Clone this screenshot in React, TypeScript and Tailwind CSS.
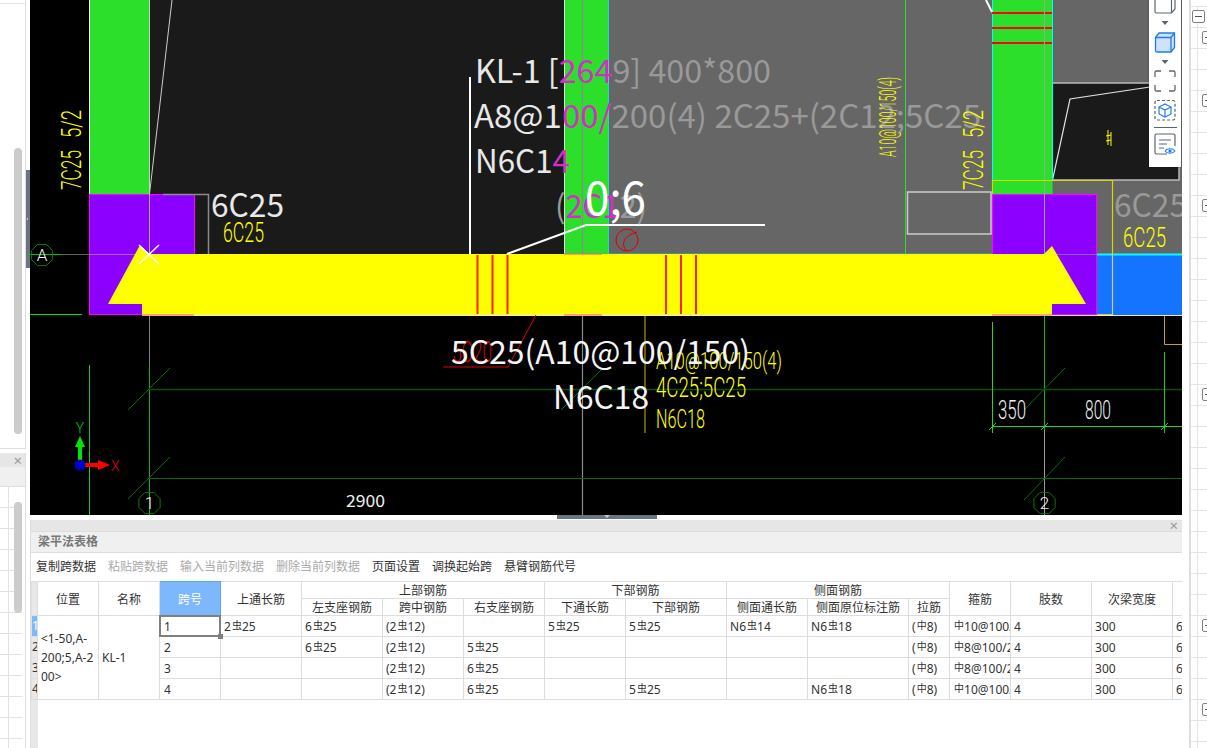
import type { ReactNode } from "react";

const GRAY = "#999999";
const PINK = "#d22fc8";
const WHITE = "#e8e8e8";
const SANS = "'Noto Sans CJK SC', 'Noto Sans', sans-serif";
const CAD = "Roboto, 'Liberation Sans', sans-serif";

function Bar({ c = "虫" }: { c?: string }) {
  return <span className="relative -top-[2px] ml-[1px] text-[10px] leading-none">{c}</span>;
}

function Steel({ a, b, c }: { a?: string; b: string; c?: string }) {
  return (
    <>
      {a}
      <Bar c={c} />
      {b}
    </>
  );
}

const colWidths = [6, 61, 61, 61, 81, 81, 81, 81, 81, 101, 81, 101, 41, 61, 81, 81, 81];

type Row = { no: string; top?: ReactNode; left?: ReactNode; right?: ReactNode; through?: ReactNode; bottom?: ReactNode; side?: ReactNode; sideAt?: ReactNode; stir: ReactNode };

const rows: Row[] = [
  {
    no: "1",
    top: <Steel a="2" b="25" />,
    left: <Steel a="6" b="25" />,
    through: <Steel a="5" b="25" />,
    bottom: <Steel a="5" b="25" />,
    side: <Steel a="N6" b="14" />,
    sideAt: <Steel a="N6" b="18" />,
    stir: <Steel c="中" b="10@100/200(4)" />,
  },
  {
    no: "2",
    left: <Steel a="6" b="25" />,
    right: <Steel a="5" b="25" />,
    stir: <Steel c="中" b="8@100/200(4)" />,
  },
  {
    no: "3",
    right: <Steel a="6" b="25" />,
    stir: <Steel c="中" b="8@100/200(4)" />,
  },
  {
    no: "4",
    right: <Steel a="6" b="25" />,
    bottom: <Steel a="5" b="25" />,
    sideAt: <Steel a="N6" b="18" />,
    stir: <Steel c="中" b="10@100/200(4)" />,
  },
];

function Th({ children, colSpan, rowSpan }: { children?: ReactNode; colSpan?: number; rowSpan?: number }) {
  return (
    <th colSpan={colSpan} rowSpan={rowSpan} className="border border-[#dddddd] px-0 pb-0 pt-[2px] text-center text-xs leading-[14px] font-normal whitespace-nowrap overflow-hidden">
      {children}
    </th>
  );
}

function Td({ children }: { children?: ReactNode }) {
  return <td className="border border-[#dddddd] px-[3px] pb-0 pt-[1px] text-xs leading-4 whitespace-nowrap overflow-hidden">{children}</td>;
}

function BeamTable() {
  return (
    <table className="table-fixed border-collapse w-[1222px] text-[#333333] bg-white">
      <colgroup>
        {colWidths.map((w, i) => (
          <col key={i} style={{ width: w }} />
        ))}
        <col />
      </colgroup>
      <thead>
        <tr className="h-[17px]">
          <th rowSpan={2} className="border border-[#dddddd] bg-[#e8e8e8] p-0" />
          <Th rowSpan={2}>位置</Th>
          <Th rowSpan={2}>名称</Th>
          <th rowSpan={2} className="border border-[#5aa5ee] bg-[#7db8fc] px-0 pb-0 pt-[2px] text-center text-xs font-normal text-white">
            跨号
          </th>
          <Th rowSpan={2}>上通长筋</Th>
          <Th colSpan={3}>上部钢筋</Th>
          <Th colSpan={2}>下部钢筋</Th>
          <Th colSpan={3}>侧面钢筋</Th>
          <Th rowSpan={2}>箍筋</Th>
          <Th rowSpan={2}>肢数</Th>
          <Th rowSpan={2}>次梁宽度</Th>
          <Th rowSpan={2} />
        </tr>
        <tr className="h-[17px]">
          <Th>左支座钢筋</Th>
          <Th>跨中钢筋</Th>
          <Th>右支座钢筋</Th>
          <Th>下通长筋</Th>
          <Th>下部钢筋</Th>
          <Th>侧面通长筋</Th>
          <Th>侧面原位标注筋</Th>
          <Th>拉筋</Th>
        </tr>
      </thead>
      <tbody>
        {rows.map((r, i) => (
          <tr key={r.no} className="h-[21px]">
            <td className={`border border-[#dddddd] p-0 text-xs overflow-hidden ${i === 0 ? "bg-[#7db8fc] text-white" : "bg-[#e8e8e8]"}`}>{r.no}</td>
            {i === 0 && (
              <>
                <td rowSpan={4} className="border border-[#dddddd] px-[3px] py-0 text-xs leading-[19px] whitespace-nowrap">
                  {"<1-50,A-"}
                  <br />
                  {"200;5,A-2"}
                  <br />
                  {"00>"}
                </td>
                <td rowSpan={4} className="border border-[#dddddd] px-[3px] py-0 text-xs">
                  KL-1
                </td>
              </>
            )}
            <td className="relative border border-[#dddddd] px-[4px] pb-0 pt-[2px] text-xs leading-4">
              {r.no}
              {i === 0 && (
                <>
                  <div className="absolute -inset-px border-2 border-[#808080]" />
                  <div className="absolute -right-[3px] -bottom-[3px] w-[5px] h-[5px] bg-[#808080]" />
                </>
              )}
            </td>
            <Td>{r.top}</Td>
            <Td>{r.left}</Td>
            <Td>
              <span>
                (<Steel a="2" b="12" />)
              </span>
            </Td>
            <Td>{r.right}</Td>
            <Td>{r.through}</Td>
            <Td>{r.bottom}</Td>
            <Td>{r.side}</Td>
            <Td>{r.sideAt}</Td>
            <Td>
              (<Bar c="中" />
              8)
            </Td>
            <Td>{r.stir}</Td>
            <Td>4</Td>
            <Td>300</Td>
            <Td>600</Td>
          </tr>
        ))}
      </tbody>
    </table>
  );
}

function T({ x, y, w, size, fill, children, font = SANS, weight }: { x: number; y: number; w?: number; size: number; fill: string; children: ReactNode; font?: string; weight?: number }) {
  return (
    <text x={x} y={y} fontSize={size} fill={fill} fontFamily={font} fontWeight={weight} textLength={w} lengthAdjust={w ? "spacingAndGlyphs" : undefined}>
      {children}
    </text>
  );
}

function VText({ x, y, w, size = 28, children }: { x: number; y: number; w: number; size?: number; children: string }) {
  return (
    <text transform={`translate(${x} ${y}) rotate(-90)`} fontSize={size} fill="#ffff00" fontFamily={CAD} fontWeight={300} textLength={w} lengthAdjust="spacingAndGlyphs">
      {children}
    </text>
  );
}

function Ring({ cx, cy, label }: { cx: number; cy: number; label: string }) {
  const pts = Array.from({ length: 8 }, (_, i) => {
    const a = (i * Math.PI) / 4 + Math.PI / 8;
    return `${cx + 11.5 * Math.cos(a)},${cy + 11.5 * Math.sin(a)}`;
  }).join(" ");
  return (
    <g>
      <polygon points={pts} fill="none" stroke="#0b7a0b" />
      <text x={cx} y={cy + 6} fontSize={17} fill="#f0f0f0" textAnchor="middle" fontFamily={CAD} fontWeight={300}>
        {label}
      </text>
    </g>
  );
}

function CadDrawing() {
  return (
    <svg width={1152} height={515} viewBox="30 0 1152 515" className="block">
      <rect x={30} y={0} width={1152} height={515} fill="#000000" />
      {/* slab regions */}
      <rect x={149} y={0} width={416} height={254} fill="#1a1a1a" />
      <rect x={609} y={0} width={384} height={254} fill="#666666" />
      <rect x={1052} y={0} width={130} height={254} fill="#666666" />
      <rect x={1052} y={83} width={127} height={97} fill="#1a1a1a" stroke="#bbbbbb" strokeWidth={1.5} />
      <polyline points="1052.5,180 1070,99 1150,87" fill="none" stroke="#e0e0e0" strokeWidth={1.2} />
      {/* columns */}
      <rect x={89.5} y={0} width={60} height={194} fill="#2bdf2b" />
      <line x1={89.5} y1={0} x2={89.5} y2={194} stroke="#ffffff" />
      <line x1={149.5} y1={0} x2={149.5} y2={194} stroke="#cccccc" />
      <rect x={564.5} y={0} width={44} height={254} fill="#2bdf2b" />
      <line x1={564.5} y1={0} x2={564.5} y2={254} stroke="#e0e0e0" />
      <line x1={608.5} y1={0} x2={608.5} y2={254} stroke="#22d6d6" />
      <rect x={992.5} y={0} width={60} height={194} fill="#2bdf2b" />
      <line x1={992.5} y1={0} x2={992.5} y2={180} stroke="#00ffff" />
      <line x1={1052.5} y1={0} x2={1052.5} y2={180} stroke="#00ffff" />
      {[13, 28, 43].map((y) => (
        <line key={y} x1={992} y1={y} x2={1052} y2={y} stroke="#ff0000" strokeWidth={2} />
      ))}
      {/* purple supports */}
      <rect x={89.5} y={194.5} width={105} height={60} fill="#8b00ff" stroke="#ff00ff" />
      <rect x={89.5} y={254.5} width={60} height={60} fill="#8b00ff" stroke="#ff00ff" />
      <rect x={992.5} y={194.5} width={104} height={120} fill="#8b00ff" stroke="#ff00ff" />
      <rect x={1097} y={255} width={85} height={60} fill="#1473ff" />
      {/* axes */}
      <line x1={30} y1={254.5} x2={1182} y2={254.5} stroke="#8a8a8a" strokeOpacity={0.7} />
      <line x1={30} y1={254.5} x2={62} y2={254.5} stroke="#00c000" />
      <line x1={149.5} y1={194} x2={149.5} y2={254} stroke="#aaaaaa" />
      <line x1={149.5} y1={316} x2={149.5} y2={365} stroke="#808080" />
      <line x1={149.5} y1={365} x2={149.5} y2={515} stroke="#17b217" />
      <line x1={582.5} y1={0} x2={582.5} y2={515} stroke="#8a8a8a" strokeWidth={1.2} />
      <line x1={1044.5} y1={0} x2={1044.5} y2={316} stroke="#a0a0a0" />
      <line x1={1044.5} y1={316} x2={1044.5} y2={430} stroke="#17b217" />
      <line x1={1044.5} y1={430} x2={1044.5} y2={515} stroke="#9a9a9a" />
      <line x1={905.5} y1={0} x2={905.5} y2={254} stroke="#2bdf2b" />
      <line x1={30} y1={314.5} x2={82} y2={314.5} stroke="#00e600" />
      <line x1={89.5} y1={365} x2={89.5} y2={515} stroke="#1cc81c" />
      <line x1={609} y1={254.5} x2={992} y2={254.5} stroke="#00ffff" strokeWidth={1.5} />
      <line x1={1097} y1={254.5} x2={1182} y2={254.5} stroke="#00ffff" strokeWidth={2} />
      {/* beam */}
      <polygon points="140,245 149,254 1044,254 1052,246 1086,304 1052,304 1052,315 142,315 142,304 108,304" fill="#ffff00" />
      <line x1={142} y1={315.5} x2={1182} y2={315.5} stroke="#e8e8e8" />
      <line x1={142} y1={315} x2={194} y2={315} stroke="#ff4fa0" />
      <line x1={564} y1={315} x2={602} y2={315} stroke="#ff4fa0" />
      <line x1={564} y1={254} x2={602} y2={254} stroke="#ff4fa0" />
      <line x1={992} y1={315} x2={1052} y2={315} stroke="#ff4fa0" />
      {[477.5, 492.5, 507.5, 666, 681, 696].map((x) => (
        <line key={x} x1={x} y1={255} x2={x} y2={314} stroke="#ff2000" strokeWidth={2} />
      ))}
      {/* yellow outline */}
      <polyline points="992.5,194 992.5,180.5 1112.5,180.5 1112.5,314.5 1097,314.5" fill="none" stroke="#d8d800" strokeWidth={1.2} />
      <line x1={1112.5} y1={254} x2={1112.5} y2={315} stroke="#c9c9a0" />
      <polyline points="1164.5,316 1164.5,344.5 1182,344.5" fill="none" stroke="#c8a800" />
      <line x1={645} y1={316} x2={645} y2={433} stroke="#8a7a00" strokeWidth={1.5} />
      {/* dimension lines */}
      <line x1={149} y1={389.5} x2={1182} y2={389.5} stroke="#0a4f0a" strokeWidth={1.5} />
      <line x1={149} y1={478.5} x2={1182} y2={478.5} stroke="#0a6a0a" />
      <polyline points="992.5,322 992.5,433" fill="none" stroke="#1fd91f" />
      <polyline points="1164.5,352 1164.5,433" fill="none" stroke="#1fc81f" />
      <line x1={992} y1={426.5} x2={1182} y2={426.5} stroke="#1fd91f" />
      {[992.5, 1044.5, 1164.5].map((x) => (
        <line key={x} x1={x - 3.5} y1={430} x2={x + 3.5} y2={423} stroke="#1fd91f" />
      ))}
      {[
        [170, 368, 128, 410],
        [170, 457, 128, 499],
        [602, 369, 561, 410],
        [1065, 368, 1024, 410],
        [1065, 457, 1024, 500],
      ].map(([x1, y1, x2, y2]) => (
        <line key={x1 * y1} x1={x1} y1={y1} x2={x2} y2={y2} stroke="#0b6a0b" />
      ))}
      {/* leaders */}
      <line x1={172} y1={0} x2={149.5} y2={194} stroke="#cccccc" />
      <line x1={986} y1={0} x2={992} y2={12} stroke="#ffffff" strokeWidth={2} />
      <polyline points="163,194.5 208.5,194.5 208.5,254" fill="none" stroke="#8a8a8a" strokeWidth={1.5} />
      <rect x={907.5} y={192} width={83.5} height={42} fill="none" stroke="#cccccc" strokeWidth={1.5} />
      <line x1={470} y1={77} x2={470} y2={254} stroke="#ffffff" strokeWidth={2} />
      <polyline points="507,254 586,225 765,225" fill="none" stroke="#ffffff" strokeWidth={2} />
      <polyline points="536,315 508,367 443,367" fill="none" stroke="#e00000" />
      <circle cx={627} cy={240} r={11} fill="none" stroke="#e00000" />
      <path d="M627 251C621 246 622 236 637 232" fill="none" stroke="#e00000" />
      <line x1={139} y1={245} x2={159} y2={264} stroke="#ffffff" strokeWidth={1.5} />
      <line x1={159} y1={245} x2={139} y2={264} stroke="#ffffff" strokeWidth={1.5} />

      <Ring cx={42} cy={255} label="A" />
      <Ring cx={149.5} cy={503} label="1" />
      <Ring cx={1044.5} cy={503} label="2" />

      {/* drawn text */}
      <T x={452} y={362} w={40} size={30} fill="#cc0000" font={CAD} weight={300}>
        5C20
      </T>
      <T x={656} y={369} w={126} size={24} fill="#ffff00" font={CAD} weight={300}>
        A10@100/150(4)
      </T>
      <T x={656} y={397} w={90} size={27} fill="#ffff00" font={CAD} weight={300}>
        4C25;5C25
      </T>
      <T x={656} y={428} w={49} size={26} fill="#ffff00" font={CAD} weight={300}>
        N6C18
      </T>
      <T x={475} y={83} w={296} size={32} fill={WHITE}>
        KL-1 [<tspan fill={PINK}>264</tspan>
        <tspan fill={GRAY}>9] 400*800</tspan>
      </T>
      <T x={474} y={128} w={507} size={32} fill={WHITE}>
        A8@1<tspan fill={PINK}>00/</tspan>
        <tspan fill={GRAY}>200(4) 2C25+(2C12;5C25</tspan>
      </T>
      <T x={475} y={173} w={95} size={32} fill={WHITE}>
        N6C1<tspan fill={PINK}>4</tspan>
      </T>
      <T x={555} y={218} w={92} size={32} fill={GRAY}>
        (<tspan fill={PINK}>2C1</tspan>2)
      </T>
      <T x={585} y={215} w={61} size={46} fill="#ffffff">
        0;6
      </T>
      <T x={211} y={217} w={73} size={32} fill={WHITE}>
        6C25
      </T>
      <T x={1114} y={217} w={73} size={32} fill={GRAY}>
        6C25
      </T>
      <T x={223} y={242} w={41} size={28} fill="#ffff00" font={CAD} weight={300}>
        6C25
      </T>
      <T x={1123} y={247} w={43} size={28} fill="#ffff00" font={CAD} weight={300}>
        6C25
      </T>
      <T x={451} y={364} w={299} size={32} fill="#f4f4f4">
        5C25(A10@100/150)
      </T>
      <T x={553} y={409} w={96} size={32} fill="#f4f4f4">
        N6C18
      </T>
      <T x={346} y={507} w={39} size={17} fill="#f0f0f0">
        2900
      </T>
      <T x={998} y={419} w={28} size={26} fill="#f0f0f0" font={CAD} weight={300}>
        350
      </T>
      <T x={1085} y={419} w={26} size={26} fill="#f0f0f0" font={CAD} weight={300}>
        800
      </T>
      <VText x={81} y={190} w={40}>
        7C25
      </VText>
      <VText x={81} y={138} w={28}>
        5/2
      </VText>
      <VText x={983} y={190} w={40}>
        7C25
      </VText>
      <VText x={983} y={138} w={28}>
        5/2
      </VText>
      <VText x={896} y={157} w={80} size={24}>
        A10@100/150(4)
      </VText>
      <path d="M1108 130v15M1111 132v14M1106 136l5-1M1106 141l5-1" fill="none" stroke="#ffff00" />

      {/* UCS icon */}
      <rect x={78} y={446} width={4} height={19} fill="#00e600" />
      <polygon points="80,436 75,447 85,447" fill="#00e600" />
      <text x={80} y={433} fontSize={14} fill="#00d000" textAnchor="middle" fontFamily={CAD} fontWeight={300}>
        Y
      </text>
      <rect x={82} y={463} width={17} height={4} fill="#ff0000" />
      <polygon points="110,465 98,460 98,470" fill="#ff0000" />
      <text x={111} y={471} fontSize={14} fill="#e00000" fontFamily={CAD} fontWeight={300}>
        X
      </text>
      <circle cx={80} cy={465} r={5.5} fill="#0000c8" />
    </svg>
  );
}

function ViewToolbar() {
  const dark = "#5b6472";
  const blue = "#1e7cf0";
  return (
    <div className="absolute top-0 right-px w-[32px] h-[167px] bg-white shadow-[0_0_2px_rgba(0,0,0,0.35)]">
      <svg width={32} height={167} viewBox="0 0 32 167" fill="none">
        {/* cube cut by the top edge */}
        <path d="M6 -4v15.5a1.5 1.5 0 0 0 1.5 1.5h15L26 9V-4M22.5 13V-4" stroke={dark} strokeWidth={1.2} />
        <path d="M12.5 21h7l-3.5 4z" fill={dark} />
        <path d="M6.5 37.5L10 33h15.5v14.5L22 52H8a1.5 1.5 0 0 1-1.5-1.5z" fill="#cfe2fb" stroke={blue} strokeWidth={1.3} />
        <path d="M6.5 37.5H22V52M22 37.5L25.5 33" stroke={blue} strokeWidth={1.3} />
        <path d="M12.5 60h7l-3.5 4z" fill={dark} />
        <path d="M6 77v-4.5A1.5 1.5 0 0 1 7.5 71H12M20 71h4.5A1.5 1.5 0 0 1 26 72.5V77M26 85v4.5a1.5 1.5 0 0 1-1.5 1.5H20M12 91H7.5A1.5 1.5 0 0 1 6 89.5V85" stroke={dark} strokeWidth={1.3} />
        <rect x={6} y={100.5} width={20} height={19.5} rx={2} stroke={dark} strokeWidth={1.2} strokeDasharray="3 2" />
        <path d="M16 104l6 3v7l-6 3-6-3v-7zM10 107l6 3 6-3M16 110v7" stroke={blue} strokeWidth={1.2} />
        <line x1={5} y1={127.5} x2={28} y2={127.5} stroke={dark} />
        <path d="M18 154H7.5A1.5 1.5 0 0 1 6 152.5V135.5A1.5 1.5 0 0 1 7.5 134h17a1.5 1.5 0 0 1 1.5 1.5V146" stroke={dark} strokeWidth={1.2} />
        <path d="M10 140h12M10 144h8M10 148h5" stroke={dark} />
        <path d="M16 151c2-3 8-3 10 0-2 3-8 3-10 0z" stroke={blue} fill="white" strokeWidth={1.1} />
        <circle cx={21} cy={151} r={1.6} fill={blue} />
      </svg>
    </div>
  );
}

function LeftPanel() {
  return (
    <div className="w-[30px] shrink-0 flex flex-col bg-white">
      <div className="relative h-[449px] w-[26px] pt-[3px] border-r border-b border-[#dddddd]">
        <div className="border-t border-[#e4e4e4]" />
        <div className="absolute left-[14px] top-[148px] w-[8px] h-[286px] rounded-full bg-[#cccccc]" />
      </div>
      <div className="relative flex-1 mt-[4px] w-[26px] border-r border-[#dddddd] overflow-hidden">
        <div className="h-[14px] bg-[#e6e6e6] flex items-center justify-end pr-[3px] text-[15px] leading-none text-[#999999]">×</div>
        <div className="h-[20px] bg-[#f0f0f0] border-b border-[#dddddd]" />
        {Array.from({ length: 13 }, (_, i) => (
          <div key={i} className="h-[21px] border-b border-[#e2e2e2] w-[22px] flex">
            <div className="w-[9px] border-r border-[#e2e2e2]" />
          </div>
        ))}
        <div className="absolute left-[14px] top-[49px] w-[8px] h-[111px] rounded-full bg-[#cccccc]" />
      </div>
    </div>
  );
}

function Toggle({ left, top }: { left: number; top: number }) {
  return (
    <div className="absolute w-[13px] h-[13px] bg-white border border-[#808080] rounded-[2px] flex items-center justify-center" style={{ left, top }}>
      <div className="w-[7px] h-px bg-[#555555]" />
    </div>
  );
}

function RightPanel() {
  return (
    <div className="relative w-[25px] shrink-0 bg-white overflow-hidden">
      <div className="absolute left-[7px] top-0 bottom-0 w-[2px] bg-[#dddddd]" />
      <div className="ml-[9px] pt-[6px]">
        {Array.from({ length: 36 }, (_, i) => (
          <div key={i} className="h-[21px] border-t border-[#e4e4e4] flex">
            <div className="w-[7px] border-r border-[#e4e4e4]" />
          </div>
        ))}
      </div>
      <Toggle left={10} top={10} />
      {[31, 94, 199, 388, 619, 703].map((top) => (
        <Toggle key={top} left={20} top={top} />
      ))}
    </div>
  );
}

function Caret({ d }: { d: string }) {
  return (
    <svg width={8} height={8} viewBox="0 0 8 8" className="block">
      <path d={d} fill="#c4c9cf" />
    </svg>
  );
}

export default function App() {
  const tools = [
    { label: "复制跨数据" },
    { label: "粘贴跨数据", off: true },
    { label: "输入当前列数据", off: true },
    { label: "删除当前列数据", off: true },
    { label: "页面设置" },
    { label: "调换起始跨" },
    { label: "悬臂钢筋代号" },
  ];

  return (
    <div className="flex w-[1207px] h-[748px] overflow-hidden bg-white font-['Noto_Sans','Noto_Sans_CJK_SC',sans-serif] text-[#333333]">
      <LeftPanel />
      <div className="w-[1152px] shrink-0 flex flex-col">
        <div className="relative h-[515px]">
          <CadDrawing />
          <ViewToolbar />
          <div className="absolute -left-[4px] top-[170px] w-[4px] h-[98px] bg-[#6b7580] flex items-center overflow-hidden">
            <Caret d="M1 4l3-3v6z" />
          </div>
          <div className="absolute -right-[4px] top-[169px] w-[4px] h-[100px] bg-[#6b7580] flex items-center overflow-hidden">
            <Caret d="M3 4L0 1v6z" />
          </div>
          <div className="absolute left-[527px] top-full w-[100px] h-[4px] bg-[#6b7580] flex justify-center overflow-hidden">
            <Caret d="M1 0h6L4 3z" />
          </div>
        </div>
        <div className="mt-[5px] flex-1 min-h-0 flex flex-col border-l border-[#dddddd] overflow-hidden">
          <div className="h-[11px] bg-[#e6e6e6] flex items-center justify-end pr-[4px] text-[15px] leading-none text-[#999999]">×</div>
          <div className="h-[22px] bg-[#f0f0f0] border-y border-[#dddddd] pl-[7px] flex items-center text-xs font-bold text-[#777777]">梁平法表格</div>
          <div className="h-[28px] flex items-center gap-3 pl-[5px] text-xs">
            {tools.map((t) => (
              <span key={t.label} className={t.off ? "text-[#aaaaaa]" : "text-[#333333]"}>
                {t.label}
              </span>
            ))}
          </div>
          <div className="flex-1 min-h-0 flex flex-col">
            <BeamTable />
            <div className="flex-1 w-[7px] bg-[#e8e8e8]" />
          </div>
        </div>
      </div>
      <RightPanel />
    </div>
  );
}
